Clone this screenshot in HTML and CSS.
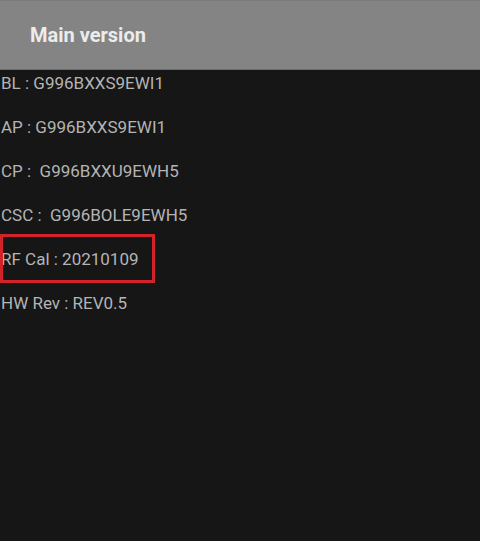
FILE: index.html
```html
<html>
<head>
    <link rel="stylesheet" href="styles.css">
</head>
<body>
    <div class="header">
        <h1 class="title">Main version</h1>
    </div>

    <!-- versjonsliste -->
    <div class="list">
        <div class="row">BL : G996BXXS9EWI1</div>
        <div class="row">AP : G996BXXS9EWI1</div>
        <div class="row">CP :&nbsp; G996BXXU9EWH5</div>
        <div class="row">CSC :&nbsp; G996BOLE9EWH5</div>
        <div class="row marked">RF Cal : 20210109</div>
        <div class="row">HW Rev : REV0.5</div>
    </div>
</body>
</html>
```

FILE: styles.css
```css
html {
    font-family: Roboto, "Liberation Sans", sans-serif;
}

body {
    margin: 0;
    background-color: #161616;
    height: 541px;
    overflow: hidden;
}

.header {
    height: 68px;
    background-color: #848484;
    border-top: 1px solid #7a7a7a;
    border-bottom: 1px solid #6a6a6a;
    display: flex;
    align-items: center;
    padding-left: 30px;
}

.title {
    margin: 0;
    font-size: 20px;
    font-weight: bold;
    color: #ececec;
}

.row {
    height: 44px;
    line-height: 26px;
    font-size: 17px;
    color: #b4b4b4;
    padding-left: 1px;
}

/* rød markering rundt RF Cal */
.marked {
    position: relative;
}

.marked::after {
    content: "";
    position: absolute;
    left: 0;
    top: -12px;
    width: 149px;
    height: 43px;
    border: 3px solid #d2232a;
}
```
